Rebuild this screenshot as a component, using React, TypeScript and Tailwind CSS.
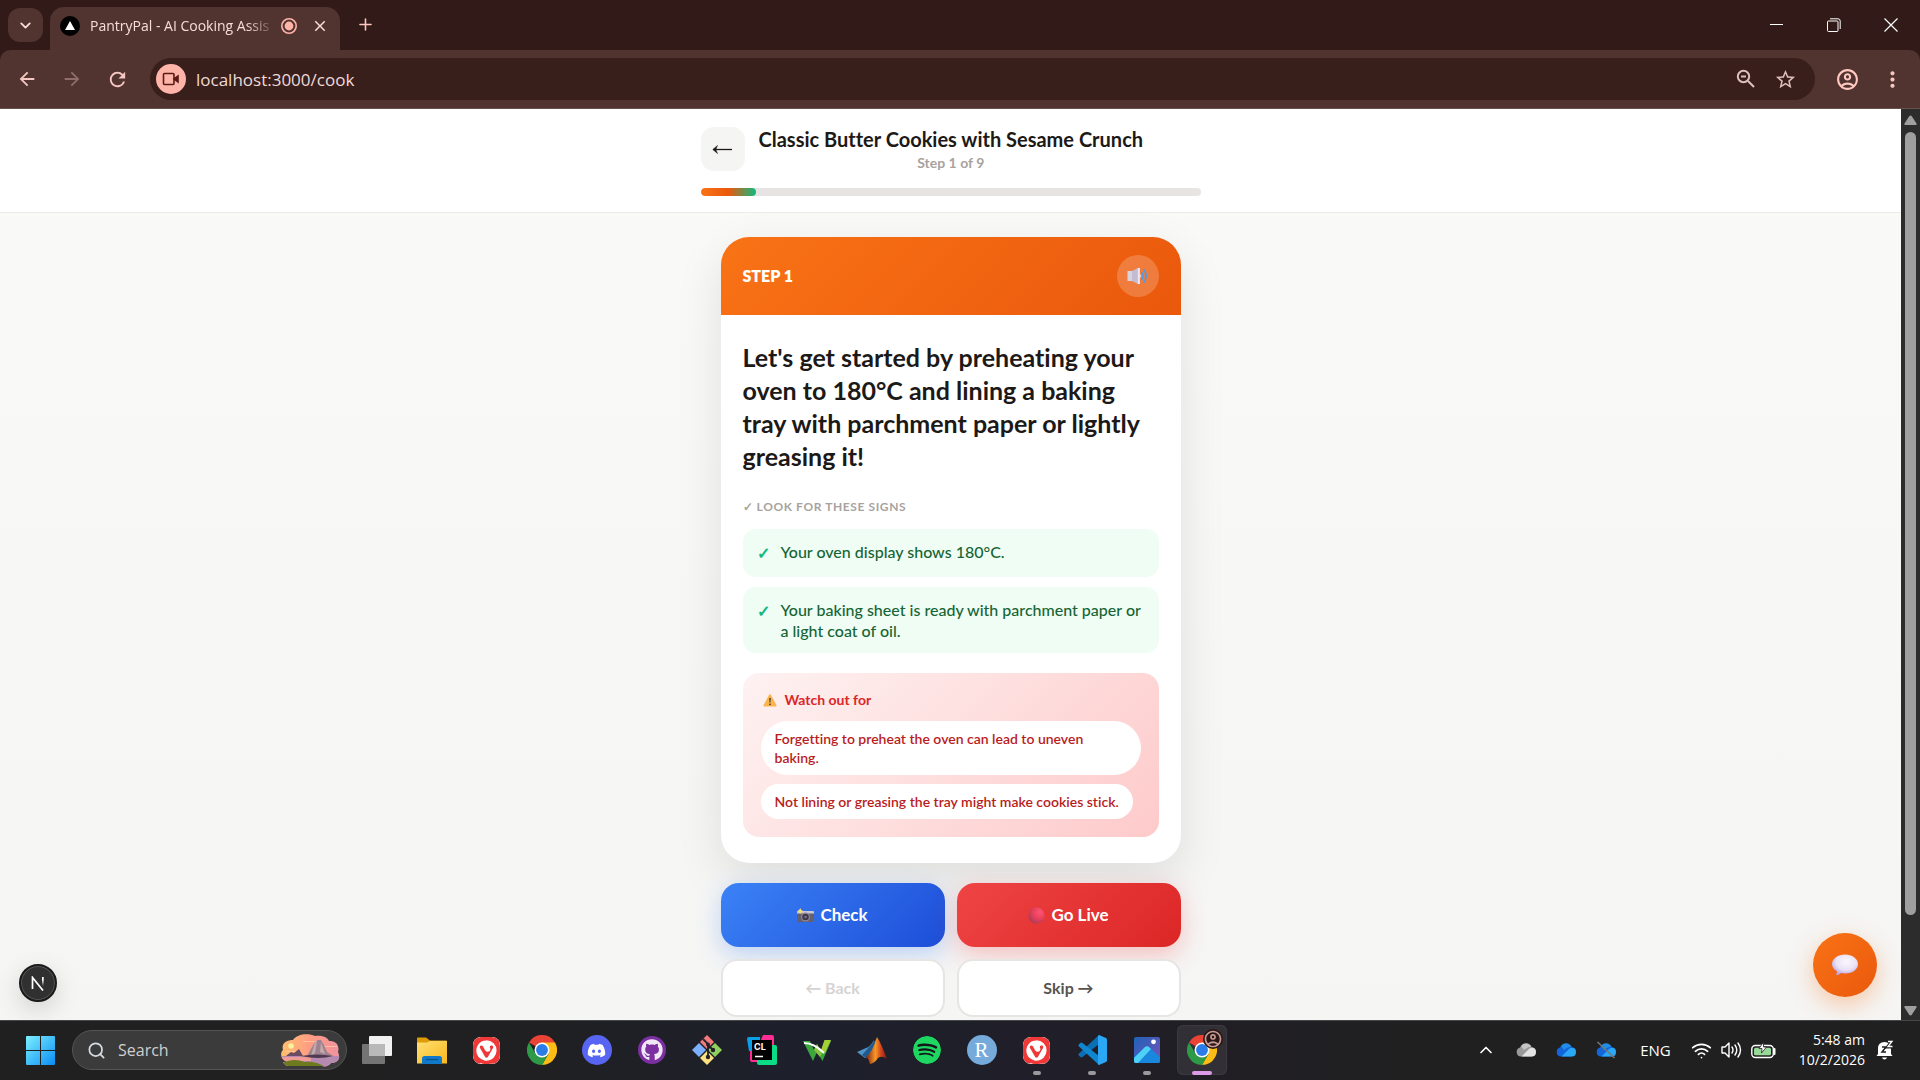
import React from "react"
import { FaDiscord, FaGithub } from "react-icons/fa"
import { SiSpotify, SiVivaldi } from "react-icons/si"
import {
  MdArrowBack,
  MdArrowForward,
  MdClose,
  MdMoreVert,
  MdOutlineAccountCircle,
  MdRefresh,
  MdStarBorder,
} from "react-icons/md"
import { ChevronDown, ChevronUp, Plus, Search, Wifi } from "lucide-react"

const signs = [
  "Your oven display shows 180°C.",
  "Your baking sheet is ready with parchment paper or a light coat of oil.",
]

const warnings = [
  "Forgetting to preheat the oven can lead to uneven baking.",
  "Not lining or greasing the tray might make cookies stick.",
]

const step = 1
const totalSteps = 9

/* ---------- Browser ---------- */

function RecordingIcon() {
  return (
    <svg width="18" height="18" viewBox="0 0 18 18" fill="none">
      <circle cx="9" cy="9" r="7.2" stroke="#ffb4a9" strokeWidth="1.6" />
      <circle cx="9" cy="9" r="4.4" fill="#ffb4a9" />
    </svg>
  )
}

function TabStrip() {
  return (
    <div className="flex h-[50px] shrink-0 items-end bg-[#311a17] pl-2 text-[#f7ddd9]">
      <button aria-label="Search tabs" className="mb-2 flex h-[34px] w-[35px] items-center justify-center rounded-xl bg-[#51332f]">
        <ChevronDown size={17} strokeWidth={2.6} />
      </button>

      <div className="ml-[7px] flex h-[43px] w-[290px] items-center rounded-t-[14px] bg-[#51332f] pb-2 pl-[10px] pt-[2px]">
        <svg width="20" height="20" viewBox="0 0 20 20" className="shrink-0">
          <circle cx="10" cy="10" r="10" fill="#000" />
          <path d="M10 5l5 9H5z" fill="#fff" />
        </svg>
        <span className="ml-[10px] w-[186px] whitespace-nowrap text-sm [mask-image:linear-gradient(to_right,black_84%,transparent)]">
          PantryPal - AI Cooking Assis
        </span>
        <span className="ml-1 shrink-0"><RecordingIcon /></span>
        <button aria-label="Close tab" className="ml-[13px] shrink-0"><MdClose size={18} /></button>
      </div>

      <button aria-label="New tab" className="mb-4 ml-4 text-[#ffc9c1]"><Plus size={19} strokeWidth={2} /></button>

      <div className="ml-auto flex self-stretch pr-px text-white">
        <button aria-label="Minimize" className="flex w-[57px] items-center justify-center">
          <svg width="14" height="14" viewBox="0 0 14 14" stroke="currentColor"><path d="M0 6.5h13" /></svg>
        </button>
        <button aria-label="Restore" className="flex w-[57px] items-center justify-center">
          <svg width="14" height="14" viewBox="0 0 14 14" fill="none" stroke="currentColor">
            <rect x=".5" y="3" width="10.5" height="10.5" rx="1" />
            <path d="M3 .8h8a2.2 2.2 0 0 1 2.2 2.2v8" />
          </svg>
        </button>
        <button aria-label="Close" className="flex w-[57px] items-center justify-center">
          <svg width="14" height="14" viewBox="0 0 14 14" stroke="currentColor" strokeWidth="1.2"><path d="M.5.5l13 13M13.5.5l-13 13" /></svg>
        </button>
      </div>
    </div>
  )
}

function Toolbar() {
  return (
    <div className="shrink-0 bg-[#311a17]">
      <div className="flex h-[59px] items-center rounded-t-[10px] border-b border-[#6a504c] bg-[#51332f] pl-4 pr-[15px] text-[#f4c8c1]">
        <button aria-label="Back" className="mr-[23px]"><MdArrowBack size={22} /></button>
        <button aria-label="Forward" className="mr-[23px] text-[#8f6d69]"><MdArrowForward size={22} /></button>
        <button aria-label="Reload" className="mr-[21px]"><MdRefresh size={23} /></button>

        <div className="flex h-[42px] flex-1 items-center rounded-full bg-[#391f1c] pl-[6px] pr-[18px]">
          <span className="flex size-[30px] shrink-0 items-center justify-center rounded-full bg-[#ffb4a9]">
            <svg width="18" height="14" viewBox="0 0 18 14" fill="none" stroke="#5b1a14" strokeWidth="1.6">
              <rect x="1.5" y="1.5" width="10.5" height="11" rx="1" />
              <path d="M12 7l4-3v6z" fill="#5b1a14" />
            </svg>
          </span>
          <input
            aria-label="Address"
            defaultValue="localhost:3000/cook"
            className="ml-[10px] h-8 min-w-0 flex-1 bg-transparent text-[17px] text-[#eedad7] outline-none"
          />
          <svg width="20" height="20" viewBox="0 0 20 20" fill="none" stroke="#ddc0bb" strokeWidth="2" className="mr-[18px]">
            <circle cx="7.5" cy="7.5" r="5.7" />
            <path d="M12 12l6 6M5 7.5h5" />
          </svg>
          <button aria-label="Bookmark" className="text-[#ddc0bb]"><MdStarBorder size={23} /></button>
        </div>

        <button aria-label="Profile" className="ml-5 text-[#ffc9c1]"><MdOutlineAccountCircle size={25} /></button>
        <button aria-label="Menu" className="ml-5"><MdMoreVert size={25} /></button>
      </div>
    </div>
  )
}

function Scrollbar() {
  return (
    <div className="flex w-[19px] shrink-0 flex-col items-center bg-[#2c2c2c] pb-1 pt-[6px]">
      <svg width="13" height="11" viewBox="0 0 13 11" fill="#9f9f9f"><path d="M6.5.5q.8 0 1.3.8l4.7 7.2q.6 1.5-.8 1.5H1.3Q-.1 10 .5 8.500L5.200 1.300Q5.700.5 6.500.5z" /></svg>
      <div className="mt-[6px] w-[11px] flex-1 rounded-full bg-[#9f9f9f]" />
      <svg width="13" height="11" viewBox="0 0 13 11" fill="#9f9f9f" className="mt-[90px]"><path d="M6.500 10.500q.8 0 1.300-.8l4.700-7.200Q13.100 1 11.700 1H1.300Q-.1 1 .5 2.500l4.700 7.200q.5.8 1.300.8z" /></svg>
    </div>
  )
}

/* ---------- Recipe page ---------- */

function SpeakerIcon() {
  return (
    <svg width="21" height="18" viewBox="0 0 21 18" fill="none">
      <path d="M.5 4h5v10h-5z" fill="#d7d3df" />
      <path d="M5 4L11 .9q1.800-.6 1.800 1v14.200q0 1.600-1.800 1L5 14z" fill="#c3bbd0" />
      <path d="M10.800 1l2 0v16l-2 0z" fill="#ebe6f4" />
      <path d="M12.800 7q2.200 2 0 4z" fill="#efeaf6" />
      <path d="M15 6q2 3 0 6.500M17 3q4.500 6 0 12.500" stroke="#4b9be8" strokeWidth="1.600" strokeLinecap="round" />
    </svg>
  )
}

function WarningIcon() {
  return (
    <svg width="14" height="13" viewBox="0 0 14 13">
      <path d="M7 .3q.7 0 1 .6l5.500 10.300q.5 1.300-.8 1.300H1.300q-1.300 0-.8-1.300L6 .900q.3-.6 1-.6z" fill="#fbb44c" />
      <path d="M6.200 4h1.600l-.4 4.800h-.8z" fill="#433b3c" />
      <circle cx="7" cy="10.300" r=".9" fill="#433b3c" />
    </svg>
  )
}

function CameraIcon() {
  return (
    <svg width="17" height="14" viewBox="0 0 17 14">
      <rect y="3" width="17" height="11" rx="1" fill="#66606d" />
      <path d="M0 4q0-1 1-1h15q1 0 1 1v1.500H0z" fill="#cbc7d2" />
      <circle cx="8.500" cy="9" r="4.500" fill="#8f8998" />
      <circle cx="8.500" cy="9" r="3.300" fill="#3d3844" />
      <circle cx="8.500" cy="9" r="1.300" fill="#7c69a0" />
      <path d="M3.200 0l1 2 2 1-2 1-1 2-1-2-2-1 2-1z" fill="#fbe070" />
    </svg>
  )
}

function RedDot() {
  return (
    <svg width="17" height="17" viewBox="0 0 17 17">
      <defs>
        <radialGradient id="dot" cx=".7" cy=".3" r=".8">
          <stop offset="0" stopColor="#ff5474" />
          <stop offset=".5" stopColor="#e8405d" />
          <stop offset="1" stopColor="#a83a56" />
        </radialGradient>
      </defs>
      <circle cx="8.500" cy="8.500" r="8.200" fill="url(#dot)" />
    </svg>
  )
}

function BubbleIcon() {
  return (
    <svg width="28" height="22" viewBox="0 0 28 22">
      <defs>
        <radialGradient id="bubble" cx=".55" cy=".35" r=".65">
          <stop offset="0" stopColor="#fbf7fe" />
          <stop offset=".6" stopColor="#ebe2f6" />
          <stop offset="1" stopColor="#b9a5e4" />
        </radialGradient>
      </defs>
      <path d="M14 .5c7 0 13 4.200 13 9.500s-5 9.500-13 9.500q-2 0-4-.4-1.800 1.700-4.500 2.200-.6-.2-.2-1 .9-1.600.5-3.200C2.800 15.500 1 13 1 10 1 4.700 7 .5 14 .5z" fill="url(#bubble)" />
    </svg>
  )
}

function RecipeHeader() {
  return (
    <header className="border-b border-[#ececea] bg-white pb-4 pt-[18px]">
      <div className="mx-auto w-[500px]">
        <div className="flex items-start gap-[14px]">
          <button aria-label="Back to recipe" className="flex size-11 items-center justify-center rounded-[13px] bg-[#f5f5f4]">
            <svg width="21" height="11" viewBox="0 0 21 11" fill="none" stroke="#1c1917" strokeWidth="1.300">
              <path d="M1.500 5.500H20" />
              <path d="M5.500 1.500L.8 5.500l4.700 4-1.700-4z" fill="#1c1917" strokeWidth=".5" />
            </svg>
          </button>
          <div className="text-center">
            <h1 className="text-xl font-bold leading-6 text-[#1c1917]">Classic Butter Cookies with Sesame Crunch</h1>
            <p className="text-sm font-bold leading-6 text-[#a8a29e]">Step {step} of {totalSteps}</p>
          </div>
        </div>
        <div className="mt-[13px] h-2 overflow-hidden rounded-full bg-[#e7e5e4]">
          <div
            className="h-full rounded-full bg-[linear-gradient(90deg,#f97316,#ea580c_50%,#10b981)]"
            style={{ width: `${(step / totalSteps) * 100}%` }}
          />
        </div>
      </div>
    </header>
  )
}

function StepCard() {
  return (
    <article className="overflow-hidden rounded-[28px] bg-white shadow-[0_16px_48px_rgba(0,0,0,0.1)]">
      <div className="flex items-center justify-between bg-[linear-gradient(135deg,#f97316,#ea580c)] px-[22px] py-[18px] text-white">
        <span className="text-base font-extrabold">STEP {step}</span>
        <button aria-label="Read aloud" className="flex size-[42px] items-center justify-center rounded-full bg-white/20">
          <SpeakerIcon />
        </button>
      </div>

      <div className="px-[22px] py-[26px]">
        <h2 className="text-[25px] font-bold leading-[33px] text-[#1c1917]">
          Let's get started by preheating your oven to 180°C and lining a baking tray with parchment paper or lightly greasing it!
        </h2>

        <h3 className="mt-[26px] text-xs font-bold uppercase leading-4 tracking-wider text-[#a8a29e]">✓ Look for these signs</h3>
        <ul className="mt-[14px] flex flex-col gap-[10px]">
          {signs.map((sign) => (
            <li key={sign} className="flex items-start gap-3 rounded-[13px] bg-[#f0fdf4] px-[14px] py-3 text-[#166534]">
              <span className="w-3 text-base font-bold leading-6 text-[#10b981]">✓</span>
              <span className="flex-1 text-base font-medium leading-[21px]">{sign}</span>
            </li>
          ))}
        </ul>

        <section className="mt-5 rounded-2xl bg-[linear-gradient(135deg,#fef2f2,#fecaca)] p-[18px]">
          <h3 className="flex items-center gap-2 pl-[2px] text-sm font-bold leading-[18px] text-[#dc2626]">
            <WarningIcon /> Watch out for
          </h3>
          <ul className="mt-3 flex flex-col items-start gap-[9px]">
            {warnings.map((warning) => (
              <li key={warning} className="rounded-[28px] bg-white px-[14px] py-2 text-sm font-semibold leading-[19px] text-[#b91c1c]">
                {warning}
              </li>
            ))}
          </ul>
        </section>
      </div>
    </article>
  )
}

function Actions() {
  return (
    <div className="mt-5 grid grid-cols-2 gap-3 font-bold">
      <button className="flex h-16 items-center justify-center gap-[6px] rounded-[18px] bg-[linear-gradient(135deg,#3b82f6,#1d4ed8)] text-[17px] text-white shadow-[0_8px_24px_rgba(59,130,246,0.3)]">
        <CameraIcon /> Check
      </button>
      <button className="flex h-16 items-center justify-center gap-[6px] rounded-[18px] bg-[linear-gradient(135deg,#ef4444,#dc2626)] text-[17px] text-white shadow-[0_8px_24px_rgba(239,68,68,0.3)]">
        <RedDot /> Go Live
      </button>
      <button disabled className="h-[58px] rounded-2xl border-2 border-[#e7e5e4] bg-white text-base text-[#d6d3d1]">← Back</button>
      <button className="h-[58px] rounded-2xl border-2 border-[#e7e5e4] bg-white text-base text-[#57534e]">Skip →</button>
    </div>
  )
}

function CookPage() {
  return (
    <div className="relative min-w-0 flex-1 overflow-hidden bg-[linear-gradient(180deg,#fafaf9,#f5f5f4)] [font-family:Lato,sans-serif] [font-variant-ligatures:none]">
      <RecipeHeader />
      <main className="mx-auto w-[460px] pt-6">
        <StepCard />
        <Actions />
      </main>

      <button aria-label="Open chat" className="absolute bottom-[23px] right-6 flex size-16 items-center justify-center rounded-full bg-[linear-gradient(135deg,#f97316,#ea580c)] shadow-[0_8px_24px_rgba(249,115,22,0.35)]">
        <BubbleIcon />
      </button>

      <button aria-label="Dev tools" className="absolute bottom-[18px] left-[19px] flex size-[38px] items-center justify-center rounded-full border-2 border-[#1b1b1b] bg-[#303030] shadow-[0_8px_24px_rgba(0,0,0,0.14)] ring-1 ring-inset ring-[#555]">
        <svg width="14" height="15" viewBox="0 0 14 15" fill="none" strokeWidth="1.700">
          <defs>
            <linearGradient id="stem" x1="0" y1="0" x2="0" y2="1">
              <stop offset=".3" stopColor="#fff" />
              <stop offset="1" stopColor="#fff" stopOpacity="0" />
            </linearGradient>
          </defs>
          <path d="M1.500 13V1.500L12 14.500" stroke="#fff" />
          <rect x="11" y="1" width="1.700" height="9" fill="url(#stem)" />
        </svg>
      </button>
    </div>
  )
}

/* ---------- Taskbar ---------- */

function WindowsIcon() {
  return (
    <svg width="29" height="29" viewBox="0 0 29 29">
      <defs>
        <linearGradient id="win" x1="0" y1="0" x2="29" y2="29" gradientUnits="userSpaceOnUse">
          <stop stopColor="#7df0ff" />
          <stop offset="1" stopColor="#0a8cf5" />
        </linearGradient>
      </defs>
      <path d="M1 0h13v14H0V1q0-1 1-1zM15 0h13q1 0 1 1v13H15zM0 15h14v14H1q-1 0-1-1zM15 15h14v13q0 1-1 1H15z" fill="url(#win)" />
    </svg>
  )
}

function SearchScene() {
  return (
    <svg width="59" height="33" viewBox="0 0 59 33">
      <defs>
        <linearGradient id="sky" x1="0" y1="0" x2="1" y2="0">
          <stop stopColor="#ffbf6b" />
          <stop offset=".5" stopColor="#ff9c85" />
          <stop offset="1" stopColor="#ee93a0" />
        </linearGradient>
        <clipPath id="cloud">
          <path d="M7 28C-1 26-1 18 2 16 0 9 6 6 12 6c4-6 15-7 22-4 8-1 13 2 14 5 7-1 11 5 9 11 3 6 0 11-7 11-2 3-6 4-9 3H8q-4 0-6-4z" />
        </clipPath>
      </defs>
      <g clipPath="url(#cloud)">
        <rect width="59" height="33" fill="url(#sky)" />
        <path d="M22 7h16v1H22zM40 12h16v1H40zM4 17h14v1H4z" fill="#ffd0a0" fillOpacity=".7" />
        <rect y="22" width="59" height="11" fill="#b58ab0" />
        <path d="M0 23h30v4H0z" fill="#ef9c98" />
        <circle cx="10" cy="12" r="2.800" fill="#fff0a0" />
        <path d="M26 22l5-9 3-5 3-2h3l3 5 3 7 6 4z" fill="#9d8391" />
        <path d="M34 8l2-1-2 12-4 3zM40 8l4 12-5-2z" fill="#c4a9a8" />
        <path d="M5 22l5-4 3 1 5-4 4 7z" fill="#6c4c63" />
        <path d="M20 22q16-3 32 0-14 4-32 0z" fill="#51394f" />
        <path d="M0 30c8-5 16-5 24-2 8-1 16 2 20 5H0z" fill="#6e7a1e" />
      </g>
    </svg>
  )
}

function TaskViewIcon() {
  return (
    <svg width="30" height="28" viewBox="0 0 30 28">
      <rect x="7" width="23" height="20" rx="1" fill="#f1f1f1" />
      <rect y="8" width="23" height="20" rx="1" fill="#8a8a8a" fillOpacity=".8" />
      <path d="M7 8h16v12H7z" fill="#b9b9b9" />
    </svg>
  )
}

function FolderIcon() {
  return (
    <svg width="30" height="27" viewBox="0 0 30 27">
      <defs>
        <linearGradient id="folder" x1="0" y1="0" x2="1" y2="1">
          <stop stopColor="#ffdf75" />
          <stop offset="1" stopColor="#f9b91a" />
        </linearGradient>
      </defs>
      <path d="M0 1.500Q0 .5 1 .5h8l4 3h16q1 0 1 1V8H0z" fill="#df9c06" />
      <path d="M0 5.500h10l3-1.500h17v22.500H0z" fill="url(#folder)" />
      <path d="M5 27v-5.500Q5 19 7.500 19h15q2.500 0 2.500 2.500V27z" fill="#1079c9" />
      <path d="M9 22.500h12" stroke="#0a4f8c" strokeWidth="1.200" />
    </svg>
  )
}

function ChromeIcon() {
  return (
    <svg width="30" height="30" viewBox="0 0 48 48">
      <path d="M24 24L3.200 12A24 24 0 0 1 44.800 12z" fill="#ea4335" />
      <path d="M24 12h20.800A24 24 0 0 1 24 48l10.400-18z" fill="#fbbc16" />
      <path d="M13.600 30L3.200 12A24 24 0 0 0 24 48l10.400-18z" fill="#2d9a47" />
      <circle cx="24" cy="24" r="12" fill="#fff" />
      <circle cx="24" cy="24" r="9.500" fill="#2a7de9" />
    </svg>
  )
}

function VivaldiIcon() {
  return <SiVivaldi size={27} className="rounded-lg bg-white text-[#ef3939]" />
}

function DiscordIcon() {
  return (
    <span className="flex size-[30px] items-center justify-center rounded-full bg-[#5865f2] text-white"><FaDiscord size={19} /></span>
  )
}

function GithubIcon() {
  return (
    <span className="flex size-7 items-center justify-center rounded-full bg-[#7b2fa0] text-[#f0e8f5]"><FaGithub size={22} /></span>
  )
}

function GitIcon() {
  return (
    <svg width="30" height="30" viewBox="0 0 30 30">
      <path d="M15 0l7 7-7 7-7-7z" fill="#f37a7a" />
      <path d="M7 8l7 7-7 7-7-7z" fill="#7db0fb" />
      <path d="M23 8l7 7-7 7-7-7z" fill="#8fd15c" />
      <path d="M15 16l7 7-7 7-7-7z" fill="#fde07f" />
      <path d="M11 4l5 5v14M16 10l5 5" stroke="#202228" strokeWidth="1.800" fill="none" />
      <circle cx="16" cy="9.500" r="2" fill="#202228" />
      <circle cx="21" cy="15" r="2.200" fill="#202228" />
      <circle cx="16" cy="22" r="2.200" fill="#202228" />
    </svg>
  )
}

function ClionIcon() {
  return (
    <svg width="30" height="30" viewBox="0 0 30 30">
      <path d="M0 4q0-2 2-2h11v14H2z" fill="#0b9fe8" />
      <path d="M16 0h9q2 0 2 2v12H10z" fill="#ff2d92" />
      <path d="M3 16h10v11H5q-2 0-2-2z" fill="#ff2d92" />
      <path d="M20 10h8q2 0 2 2v16q0 2-2 2H12q-2 0-2-2v-5z" fill="#0bdc86" />
      <rect x="5" y="5" width="20" height="20" fill="#000" />
      <text x="7" y="15" fontSize="9" fontWeight="700" fill="#fff" fontFamily="Inter, sans-serif">CL</text>
      <path d="M8 21.500h8" stroke="#fff" strokeWidth="1.500" />
    </svg>
  )
}

function WIcon() {
  return (
    <svg width="28" height="21" viewBox="0 0 28 21">
      <path d="M0 1h7l4 9 3-6 4 7 3.500-10H28l-8.500 20-5.500-9-4 9z" fill="#3aa63c" />
      <path d="M21.500 0H28l-6 13-4-3z" fill="#a4d037" />
      <path d="M11 10l3-6 5 9-2 4z" fill="#86c540" />
      <path d="M1 3q10 0 20 10" stroke="#fff" strokeWidth="1.800" fill="none" />
    </svg>
  )
}

function MatlabIcon() {
  return (
    <svg width="30" height="27" viewBox="0 0 30 27">
      <defs>
        <linearGradient id="mat" x1="0" y1="0" x2="1" y2="0">
          <stop stopColor="#7e1d12" />
          <stop offset=".45" stopColor="#f79a27" />
          <stop offset=".7" stopColor="#d5461d" />
          <stop offset="1" stopColor="#7d1b10" />
        </linearGradient>
      </defs>
      <path d="M0 15l9-4q4-1 8-8l-4 17-5 1z" fill="#4f94c8" />
      <path d="M5 18l8-9 7-8-7 18-4 2z" fill="#1f5a8e" />
      <path d="M9 20q6-4 11-20 4 6 10 22-5-4-9-1-3 5-8 6-1-5-4-7z" fill="url(#mat)" />
    </svg>
  )
}

function SpotifyIcon() {
  return <SiSpotify size={28} className="rounded-full bg-[#15161c] text-[#1ed760]" />
}

function RIcon() {
  return (
    <span className="flex size-[30px] items-center justify-center rounded-full bg-[#75aadb] text-[21px] leading-none text-white [font-family:'Liberation_Serif',serif]">R</span>
  )
}

function CodeIcon() {
  return (
    <svg width="30" height="30" viewBox="0 0 30 30">
      <path d="M22 0L2 18.500q-1.300 1 0 2.200l1.400 1.300q1 .8 2.100.1L22 9z" fill="#0b6fb5" />
      <path d="M22 30L2 11.500q-1.300-1 0-2.200L3.400 8q1-.8 2.100-.1L22 21z" fill="#0f86cf" />
      <path d="M22 0l7 3q1 .5 1 1.800v20.400q0 1.300-1 1.800l-7 3q-1 0-1-1.500v-27q0-1.500 1-1.500z" fill="#2aa7f5" />
    </svg>
  )
}

function PhotosIcon() {
  return (
    <svg width="26" height="26" viewBox="0 0 26 26">
      <defs>
        <linearGradient id="photo" x1="0" y1="0" x2="1" y2="1">
          <stop stopColor="#1e63b9" />
          <stop offset="1" stopColor="#7a51b8" />
        </linearGradient>
      </defs>
      <rect width="26" height="26" rx="2" fill="url(#photo)" />
      <path d="M0 20L11 10q2-1.500 4 0l11 10v4q0 2-2 2H2q-2 0-2-2z" fill="#1887dd" />
      <path d="M0 21l11-11q2-1.500 4 0l2 2L4 26H2q-2 0-2-2z" fill="#4fd0f7" />
      <circle cx="19.500" cy="4.800" r="2.400" fill="#fff" />
    </svg>
  )
}

function ChromeProfileIcon() {
  return (
    <span className="relative">
      <ChromeIcon />
      <span className="absolute -right-[6px] -top-[6px] flex size-5 items-center justify-center rounded-full bg-[#2a1716] text-[#c79b95]">
        <MdOutlineAccountCircle size={20} />
      </span>
    </span>
  )
}

type App = { name: string; icon: React.ReactNode; state?: "open" | "active" }

const apps: App[] = [
  { name: "Task view", icon: <TaskViewIcon /> },
  { name: "File Explorer", icon: <FolderIcon /> },
  { name: "Vivaldi", icon: <VivaldiIcon /> },
  { name: "Chrome", icon: <ChromeIcon /> },
  { name: "Discord", icon: <DiscordIcon /> },
  { name: "GitHub Desktop", icon: <GithubIcon /> },
  { name: "Git", icon: <GitIcon /> },
  { name: "CLion", icon: <ClionIcon /> },
  { name: "W", icon: <WIcon /> },
  { name: "MATLAB", icon: <MatlabIcon /> },
  { name: "Spotify", icon: <SpotifyIcon /> },
  { name: "R", icon: <RIcon /> },
  { name: "Vivaldi window", icon: <VivaldiIcon />, state: "open" },
  { name: "VS Code", icon: <CodeIcon />, state: "open" },
  { name: "Photos", icon: <PhotosIcon />, state: "open" },
  { name: "Chrome window", icon: <ChromeProfileIcon />, state: "active" },
]

function CloudIcon({ light, dark, off }: { light: string, dark: string, off?: boolean }) {
  return (
    <svg width="20" height="18" viewBox="0 0 20 18">
      <path d="M5 15.500a4.600 4.600 0 0 1-1-9A6.500 6.500 0 0 1 15.500 6 4.800 4.800 0 0 1 15.500 15.500z" fill={dark} />
      <path d="M5.500 15.500L13 8q3-2.600 6-.2 1 1.500 1 3.200 0 4.500-4.500 4.500z" fill={light} />
      <path d="M5 5q2-3 5-3 3.500 0 5.500 3.500Q12 5.500 8 9z" fill={light} fillOpacity=".6" />
      {off && <path d="M1.500 1l17 16" stroke="#777" strokeWidth="1.500" />}
    </svg>
  )
}

function VolumeIcon() {
  return (
    <svg width="21" height="18" viewBox="0 0 21 18" fill="none" stroke="#fff" strokeWidth="1.400" strokeLinecap="round" strokeLinejoin="round">
      <path d="M1 6h3l4-4v14l-4-4H1z" />
      <path d="M11 6q2 3 0 6M14 4q3.500 5 0 10M17 2q5 7 0 14" />
    </svg>
  )
}

function BatteryIcon() {
  return (
    <svg width="25" height="17" viewBox="0 0 25 17">
      <rect x=".8" y="3.500" width="21.500" height="12" rx="3.500" fill="none" stroke="#fff" strokeWidth="1.400" />
      <rect x="3" y="5.700" width="17" height="7.600" rx="1.500" fill="#98d998" />
      <path d="M23.500 7v5" stroke="#fff" strokeWidth="2" strokeLinecap="round" />
      <path d="M12.500 0L8 6.500h3l-.5 4.500L15.500 5h-3z" fill="#fff" stroke="#202020" strokeWidth=".8" />
    </svg>
  )
}

function BellIcon() {
  return (
    <svg width="18" height="20" viewBox="0 0 18 20">
      <path d="M2 14V8.500Q2 2 8.500 2T15 8.500V14l1.500 2H.5z" fill="#fff" />
      <path d="M6 17.500h5q-.5 2-2.500 2T6 17.500z" fill="#fff" />
      <path d="M6 7h4l-4 5h4" stroke="#202020" strokeWidth="1.500" fill="none" />
      <path d="M11 .8h5L11.500 7h5" stroke="#202020" strokeWidth="3" fill="none" />
      <path d="M12 1.500h4L12 6.500h4.500" stroke="#fff" strokeWidth="1.300" fill="none" />
    </svg>
  )
}

function Taskbar() {
  return (
    <footer className="flex h-[60px] shrink-0 items-center border-t border-[#45484b] bg-[linear-gradient(90deg,#202020,#202022_28%,#1d202c_42%,#211e27_58%,#202020_75%)] px-[26px] pb-px text-white">
      <button aria-label="Start"><WindowsIcon /></button>
      <label className="ml-[17px] flex h-10 w-[275px] items-center rounded-full border border-[#555355] bg-[#3c3b3c] pl-[14px] pr-[6px]">
        <Search size={19} strokeWidth={2.200} className="shrink-0 text-[#d5dbe2]" />
        <input aria-label="Search" placeholder="Search" className="ml-3 min-w-0 flex-1 bg-transparent text-base outline-none placeholder:text-[#cfcfcf]" />
        <SearchScene />
      </label>

      <nav className="ml-[2px] flex self-stretch">
        {apps.map((app) => (
          <div key={app.name} className="flex w-[55px] items-center justify-center">
            <button
              aria-label={app.name}
              className={`relative flex size-[50px] items-center justify-center rounded-md ${app.state === "active" ? "bg-white/8 ring-1 ring-inset ring-white/5" : ""}`}
            >
              {app.icon}
              {app.state === "open" && <span className="absolute bottom-0 h-1 w-2 rounded-full bg-[#9a9a9e]" />}
              {app.state === "active" && <span className="absolute bottom-0 h-1 w-5 rounded-full bg-[#dc9be6]" />}
            </button>
          </div>
        ))}
      </nav>

      <div className="ml-auto flex items-center">
        <ChevronUp size={20} strokeWidth={2} />
        <div className="ml-5 flex gap-5">
          <CloudIcon light="#e3e3e3" dark="#9a9a9a" />
          <CloudIcon light="#28a8f5" dark="#1465d8" />
          <CloudIcon light="#28a8f5" dark="#1465d8" off />
        </div>
        <span className="ml-6 text-[15px]">ENG</span>
        <div className="ml-5 flex items-center gap-[9px]">
          <Wifi size={21} strokeWidth={2} />
          <VolumeIcon />
          <BatteryIcon />
        </div>
        <div className="ml-[23px] text-right text-sm leading-5">
          <p>5:48 am</p>
          <p>10/2/2026</p>
        </div>
        <span className="ml-[11px]"><BellIcon /></span>
      </div>
    </footer>
  )
}

export default function App() {
  return (
    <div className="flex h-screen flex-col overflow-hidden [font-family:'Open_Sans',sans-serif]">
      <TabStrip />
      <Toolbar />
      <div className="flex min-h-0 flex-1">
        <CookPage />
        <Scrollbar />
      </div>
      <Taskbar />
    </div>
  )
}
